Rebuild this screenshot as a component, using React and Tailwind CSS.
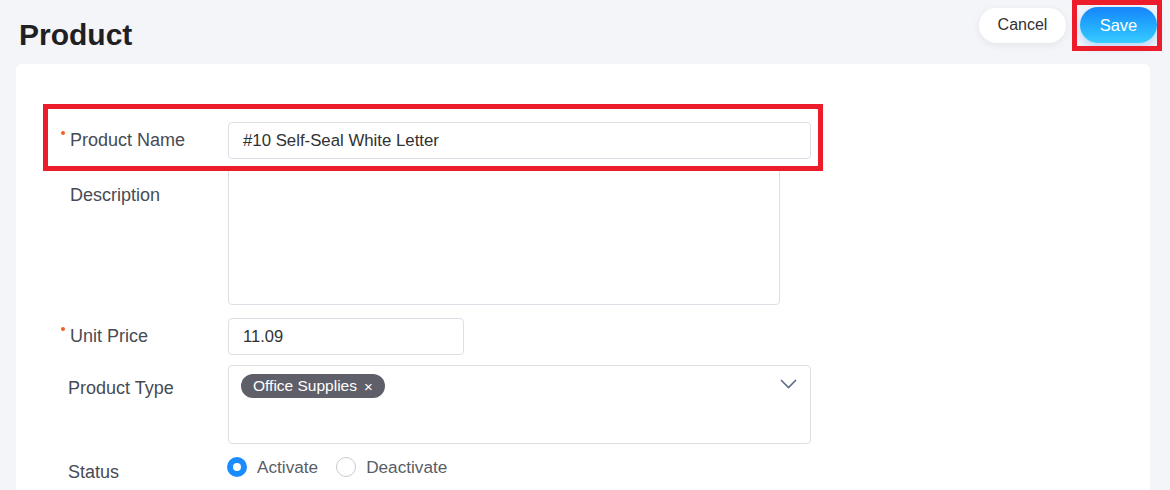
import React from 'react';

function Label({ children, required, indent = 54, className = '' }) {
  return (
    <div className={`w-[212px] shrink-0 ${className}`} style={{ paddingLeft: indent }}>
      <span className="relative text-[18px] leading-[21px] text-[#464b55]">
        {required && (
          <span className="absolute -left-[9px] top-[1px] h-[4px] w-[4px] rounded-full bg-[#f2601f]" />
        )}
        {children}
      </span>
    </div>
  );
}

function Radio({ checked, label }) {
  return (
    <label className="flex items-center gap-[10px]">
      {checked ? (
        <span className="h-[20px] w-[20px] rounded-full border-[6px] border-[#1a8cff] bg-white" />
      ) : (
        <span className="h-[20px] w-[20px] rounded-full border border-[#c8cbd2] bg-white" />
      )}
      <span className="text-[17.2px] leading-[20px] text-[#585d66]">{label}</span>
    </label>
  );
}

export default function App() {
  return (
    <div className="h-[490px] w-[1170px] overflow-hidden bg-[#f4f5f9] font-['Liberation_Sans',Arial,sans-serif]">
      <header className="flex h-[64px] items-start justify-between pl-[19px] pr-[13px]">
        <h1 className="mt-[20px] text-[30px] font-bold leading-[30px] text-[#1f2023]">Product</h1>
        <div className="mt-[7px] flex items-center gap-[14px]">
          <button className="h-[35px] w-[87px] rounded-full bg-white text-[16px] text-[#303133] shadow-[0_2px_8px_rgba(0,0,0,0.07)]">
            Cancel
          </button>
          <div className="relative">
            <button className="h-[36px] w-[77px] rounded-full bg-linear-to-b from-[#1784fb] to-[#38ccff] text-[16.5px] text-white shadow-[0_4px_10px_rgba(30,140,255,0.3)]">
              Save
            </button>
            {/* annotation frame */}
            <span className="pointer-events-none absolute -top-[7px] -bottom-[8px] -left-[8px] -right-[5px] border-[5px] border-[#ec1c2a]" />
          </div>
        </div>
      </header>

      <main className="relative ml-[16px] h-[426px] w-[1134px] rounded-t-md bg-white pt-[58px]">
        {/* annotation frame around product name row */}
        <span className="pointer-events-none absolute left-[27px] top-[40px] z-10 h-[67px] w-[780px] border-[5px] border-[#ec1c2a]" />

        <div className="flex h-[37px] items-center">
          <Label required>Product Name</Label>
          <div className="flex h-[37px] w-[583px] items-center rounded-[4px] border border-[#dcdfe6] px-[14px] text-[16.8px] text-[#303133]">
            #10 Self-Seal White Letter
          </div>
        </div>

        <div className="mt-[9px] flex">
          <Label className="pt-[16px]">Description</Label>
          <div className="h-[137px] w-[552px] rounded-[4px] border border-[#dcdfe6]" />
        </div>

        <div className="mt-[13px] flex h-[37px] items-center">
          <Label required>Unit Price</Label>
          <div className="flex h-[37px] w-[236px] items-center rounded-[4px] border border-[#dcdfe6] px-[14px] text-[16.5px] text-[#303133]">
            11.09
          </div>
        </div>

        <div className="mt-[10px] flex">
          <Label indent={52} className="pt-[12px]">Product Type</Label>
          <div className="relative h-[79px] w-[583px] rounded-[4px] border border-[#dcdfe6] pl-[12px] pt-[8px]">
            <span className="inline-flex h-[24px] items-center gap-[7px] rounded-full bg-[#5f5f69] px-[12px] text-[15.5px] text-white">
              Office Supplies
              <span className="text-[15px] leading-none">×</span>
            </span>
            <svg className="absolute right-[13px] top-[13px]" width="17" height="10" viewBox="0 0 17 10" fill="none">
              <polyline points="1,1 8.5,8.5 16,1" stroke="#5b6b89" strokeWidth="1.6" />
            </svg>
          </div>
        </div>

        <div className="mt-[13px] flex items-start">
          <Label indent={52} className="pt-[4px]">Status</Label>
          <div className="-ml-[1px] flex items-center gap-[18px]">
            <Radio checked label="Activate" />
            <Radio label="Deactivate" />
          </div>
        </div>
      </main>
    </div>
  );
}
